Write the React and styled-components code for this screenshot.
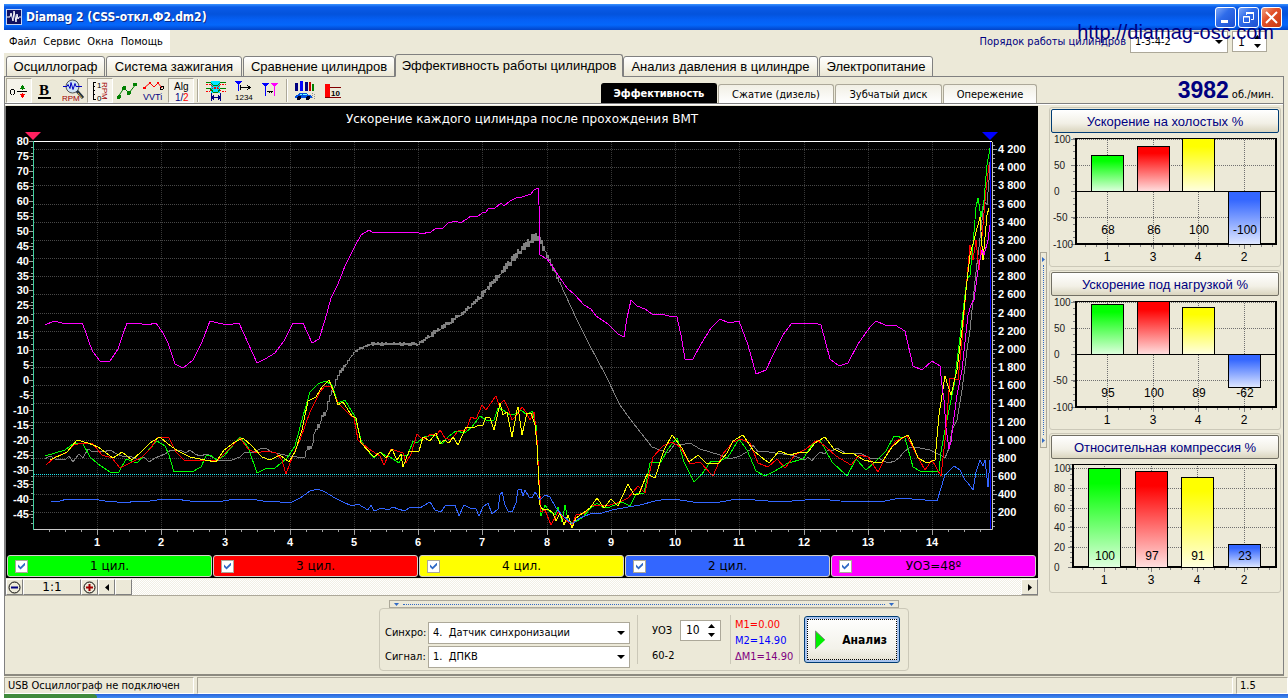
import React from "react";
import styled, { createGlobalStyle, css } from "styled-components";

const sans = '"Liberation Sans", Arial, sans-serif';
const ui = '"DejaVu Sans Condensed", "DejaVu Sans", Tahoma, sans-serif';
const wide = '"DejaVu Sans", Verdana, sans-serif';

const face = "#ece9d8";
const shade = "#aca899";
const edge = "#808080";
const navy = "#000080";

const Global = createGlobalStyle`
  *, *::before, *::after { box-sizing: border-box; }
  body { margin: 0; background: #fff; font: 11px ${ui}; color: #000; }
  button, input, select { font: inherit; color: inherit; margin: 0; padding: 0; border-radius: 0; }
  svg { display: block; }
`;

const Desktop = styled.div`
  min-height: 100vh;
  padding: 4px 0 0 4px;
  display: flex;
  flex-direction: column;
`;

const Window = styled.main`
  position: relative;
  flex: 1;
  display: flex;
  flex-direction: column;
  background: ${face};
`;

/* ---------- title bar ---------- */

const TitleBar = styled.header`
  height: 26px;
  padding: 0 6px 0 2px;
  display: flex;
  align-items: center;
  gap: 4px;
  color: #fff;
  background: linear-gradient(#3a93ff 0, #0a5be8 3px, #0453dc 10px, #0560f5 16px, #0467fb 21px, #0244c8 100%);
`;

const Title = styled.h1`
  flex: 1;
  margin: 0;
  font: bold 12px ${ui};
  text-shadow: 1px 1px 0 #0a2a88;
`;

const WindowButtons = styled.div`
  display: flex;
  gap: 2px;
`;

const WindowButton = styled.button`
  width: 21px;
  height: 21px;
  display: grid;
  place-items: center;
  border: 1px solid #fff;
  border-radius: 3px;
  background: ${(p) =>
    p.$close
      ? "linear-gradient(135deg, #f0a080, #e2512a 40%, #c8380e)"
      : "linear-gradient(135deg, #7fa8f8, #2f6cea 40%, #1c4fd0)"};
`;

/* ---------- menu row ---------- */

const MenuRow = styled.div`
  height: 24px;
  padding-right: 21px;
  display: flex;
  justify-content: space-between;
`;

const Menu = styled.nav`
  height: 23px;
  padding: 0 7px 0 5px;
  display: flex;
  align-items: center;
  gap: 7px;
  background: #fff;
`;

const MenuItem = styled.button`
  border: 0;
  background: none;
  font: 11px ${ui};
`;

const Order = styled.div`
  height: 23px;
  display: flex;
  align-items: center;
  gap: 4px;
`;

const OrderLabel = styled.label`
  color: ${navy};
  font: 11px ${ui};
`;

const Watermark = styled.a`
  position: absolute;
  top: 16px;
  right: 14px;
  color: ${navy};
  font: 20px/24px ${sans};
  text-decoration: none;
`;

/* ---------- fields ---------- */

const SelectBox = styled.div`
  display: grid;
  width: ${(p) => p.$width}px;
  height: 22px;

  > * { grid-area: 1 / 1; }
  > svg { place-self: center end; margin-right: 5px; pointer-events: none; }
`;

const Select = styled.select`
  appearance: none;
  width: 100%;
  padding-left: 4px;
  border: 1px solid ${shade};
  background: #fff;
  font: 11px ${ui};
`;

const SpinBox = styled.div`
  width: ${(p) => p.$width}px;
  height: 21px;
  padding: 0 4px 0 5px;
  display: flex;
  align-items: center;
  border: 1px solid ${shade};
  background: #fff;
`;

const SpinInput = styled.input`
  appearance: textfield;
  flex: 1;
  min-width: 0;
  border: 0;
  background: none;
  font: 12px ${ui};
  &::-webkit-inner-spin-button { appearance: none; margin: 0; }
`;

const SpinButtons = styled.div`
  display: grid;
  gap: 2px;
`;

const SpinButton = styled.button`
  width: 9px;
  height: 7px;
  display: grid;
  place-items: center;
  border: 0;
  background: none;
`;

/* ---------- tabs ---------- */

const Tabs = styled.div`
  height: 23px;
  padding-left: 2px;
  margin-bottom: -1px;
  display: flex;
  align-items: flex-end;
  gap: 1px;
  z-index: 1;
`;

const Tab = styled.button`
  width: ${(p) => p.$width}px;
  height: 21px;
  border: 1px solid ${edge};
  border-radius: 3px 3px 0 0;
  background: linear-gradient(#fff, #f4f2e6 60%, #eae6d4);
  font: 13px ${sans};
  white-space: nowrap;
  ${(p) =>
    p.$active &&
    css`
      height: 23px;
      margin: 0 -1px;
      border-bottom-color: ${face};
      background: ${face};
    `}
`;

const Page = styled.section`
  flex: 1;
  margin-right: 4px;
  display: flex;
  flex-direction: column;
  border: 1px solid ${edge};
  border-bottom-width: 2px;
  border-bottom-color: #8c8a80;
`;

/* ---------- toolbar ---------- */

const Toolbar = styled.div`
  height: 27px;
  padding: 0 9px 0 1px;
  display: flex;
  align-items: flex-end;
  border-bottom: 1px solid ${edge};
`;

const ToolGroup = styled.div`
  display: flex;
  align-self: center;
  gap: 1px;
  flex: 1;
`;

const Tool = styled.button`
  width: 26px;
  height: 25px;
  display: grid;
  place-items: center;
  border: 1px solid transparent;
  background: none;
  ${(p) =>
    p.$pressed &&
    css`
      border-color: ${shade} #fff #fff ${shade};
      background: #f5f3ea;
    `}
`;

const ToolDivider = styled.span`
  width: 2px;
  height: 23px;
  margin: 1px 3px 0 2px;
  background: linear-gradient(90deg, ${shade} 50%, #fff 50%);
`;

const SubTabs = styled.div`
  display: flex;
  align-items: flex-end;
  gap: 1px;
`;

const SubTab = styled.button`
  width: ${(p) => p.$width}px;
  height: 19px;
  border: 1px solid ${shade};
  border-bottom: 0;
  border-radius: 3px 3px 0 0;
  background: linear-gradient(#f1efe4, #fff);
  font: 11px ${ui};
  white-space: nowrap;
  ${(p) =>
    p.$active &&
    css`
      height: 20px;
      border-color: #000;
      background: #000;
      color: #fff;
      font-weight: bold;
    `}
`;

const Speed = styled.div`
  width: 237px;
  display: flex;
  align-items: baseline;
  justify-content: flex-end;
  gap: 3px;
  color: ${navy};
  font: bold 23px/26px ${sans};
`;

const SpeedUnit = styled.span`
  color: #000;
  font: 11px ${ui};
`;

/* ---------- work area ---------- */

const Work = styled.div`
  padding: 1px 2px 0 0;
  display: grid;
  grid-template-columns: minmax(0, 1fr) 11px 232px;
  border-top: 1px solid #fff;
`;

const Scope = styled.div`
  border-left: 1px solid ${edge};
`;

const Legend = styled.div`
  padding: 1px 2px 1px 1px;
  display: grid;
  grid-template-columns: repeat(5, 1fr);
  gap: 1px;
  background: #000;
`;

const LegendItem = styled.label`
  height: 22px;
  padding: 0 7px;
  display: grid;
  grid-template-columns: 13px 1fr 13px;
  align-items: center;
  border: 1px solid #d4d0c8;
  border-radius: 3px;
  background: ${(p) => p.$color};
  font: 12px ${wide};
  text-align: center;
`;

const Check = styled.input`
  appearance: none;
  width: 13px;
  height: 13px;
  border: 1px solid ${shade};
  background: #fff;
  display: grid;
  place-items: center;
  &:checked::before {
    content: "";
    width: 7px;
    height: 7px;
    background: #316ac5;
    clip-path: polygon(0 28%, 36% 64%, 100% 0, 100% 40%, 36% 100%, 0 66%);
  }
`;

const ScrollRow = styled.div`
  height: 18px;
  padding-top: 1px;
  display: flex;
  border-bottom: 1px solid ${shade};
`;

const ScrollTrack = styled.div`
  flex: 1;
  background: repeating-conic-gradient(#fff 0 25%, #f1efe4 0 50%) 0 0 / 2px 2px;
`;

const Raised = styled.button`
  width: ${(p) => p.$width}px;
  height: 16px;
  display: grid;
  place-items: center;
  border: 1px solid;
  border-color: #fff ${edge} ${edge} #fff;
  background: ${face};
  font: 12px/14px ${wide};
`;

const VSplit = styled.button`
  align-self: center;
  justify-self: center;
  width: 7px;
  height: 196px;
  margin-top: -3px;
  padding: 4px 0;
  display: flex;
  flex-direction: column;
  align-items: center;
  gap: 3px;
  border: 1px solid ${shade};
  background: ${face};
`;

const VDots = styled.span`
  flex: 1;
  border-left: 1px dotted #316ac5;
`;

const Side = styled.aside`
  padding-top: 1px;
  display: flex;
  flex-direction: column;
  gap: 3px;
`;

const Group = styled.section`
  height: 160px;
  padding: 1px;
  border: 1px solid #cbc8b8;
  border-radius: 3px;
`;

const GroupButton = styled.button`
  display: block;
  width: 100%;
  height: 24px;
  border: 1px solid ${(p) => (p.$focus ? "#003c74" : "#716f64")};
  border-radius: 2px;
  background: linear-gradient(#fff, #f2f0e6 60%, #dad5bf);
  color: ${navy};
  font: 13px ${sans};
`;

/* ---------- lower panel ---------- */

const Lower = styled.div`
  flex: 1;
  min-height: 78px;
  padding: 4px 0 3px;
  display: flex;
  flex-direction: column;
  align-items: center;
`;

const HSplit = styled.button`
  width: 510px;
  height: 8px;
  padding: 0 4px;
  display: flex;
  align-items: center;
  gap: 4px;
  border: 1px solid ${shade};
  background: ${face};
`;

const HDots = styled.span`
  flex: 1;
  border-top: 1px dotted #316ac5;
`;

const Controls = styled.form`
  width: 530px;
  height: 63px;
  padding: 0 8px 0 5px;
  display: flex;
  align-items: center;
  border: 1px solid #cbc8b8;
  border-radius: 4px;
`;

const Sources = styled.div`
  margin-right: 7px;
  display: grid;
  grid-template-columns: 43px auto;
  align-items: center;
  row-gap: 2px;
  padding-top: 10px;
`;

const Divider = styled.span`
  width: 1px;
  height: 49px;
  background: #cbc8b8;
`;

const FieldLabel = styled.label`
  font: 11px ${ui};
`;

const Timing = styled.div`
  width: 92px;
  padding: 2px 0 0 14px;
  display: grid;
  grid-template-columns: 28px auto;
  align-items: center;
  row-gap: 8px;
`;

const Marks = styled.div`
  width: 68px;
  padding: 2px 0 0 4px;
  font: 11px/16px ${ui};
  white-space: nowrap;
`;

const Mark = styled.div`
  color: ${(p) => p.$color};
`;

const Analyze = styled.button`
  width: 96px;
  height: 47px;
  margin-left: 4px;
  padding: 0 12px 0 7px;
  display: flex;
  align-items: center;
  justify-content: space-between;
  border: 1px solid #003c74;
  border-radius: 3px;
  outline: 1px dotted #000;
  outline-offset: -4px;
  box-shadow: inset 0 0 0 2px #a9c4ee;
  background: linear-gradient(#fff, #f3f2ea 70%, #e4e1d2);
  font: bold 12px ${ui};
`;

/* ---------- status and task bars ---------- */

const Status = styled.footer`
  height: 18px;
  padding-top: 1px;
  display: flex;
  gap: 3px;
`;

const StatusCell = styled.div`
  ${(p) => (p.$width ? `width: ${p.$width}px;` : "flex: 1;")}
  padding-left: 3px;
  border: 1px solid;
  border-color: ${shade} #fff #fff ${shade};
  font: 11px/15px ${ui};
`;

const TaskBar = styled.div`
  height: 4px;
  display: flex;
  background: linear-gradient(#2a62d8, #3f8cf3);
`;

const StartEdge = styled.div`
  width: 93px;
  border-radius: 0 4px 0 0;
  background: #3f8a3c;
`;

/* ---------- small glyphs ---------- */

const Triangle = ({ dir, size = 9, color = "#000" }) => {
  const h = Math.ceil(size / 2);
  const shapes = {
    down: [size, h, `0,0 ${size},0 ${size / 2},${h}`],
    up: [size, h, `0,${h} ${size},${h} ${size / 2},0`],
    left: [h, size, `${h},0 ${h},${size} 0,${size / 2}`],
    right: [h, size, `0,0 0,${size} ${h},${size / 2}`],
  };
  const [w, ht, points] = shapes[dir];
  return (
    <svg width={w} height={ht} viewBox={`0 0 ${w} ${ht}`} aria-hidden="true">
      <polygon points={points} fill={color} />
    </svg>
  );
};

const Spinner = ({ id, label, value, width }) => (
  <SpinBox $width={width}>
    <SpinInput id={id} aria-label={label} type="number" defaultValue={value} />
    <SpinButtons>
      <SpinButton type="button" aria-label="Больше"><Triangle dir="up" size={7} /></SpinButton>
      <SpinButton type="button" aria-label="Меньше"><Triangle dir="down" size={7} /></SpinButton>
    </SpinButtons>
  </SpinBox>
);

const DropDown = ({ id, width, value }) => (
  <SelectBox $width={width}>
    <Select id={id} defaultValue={value}>
      <option value={value}>{value}</option>
    </Select>
    <Triangle dir="down" size={8} />
  </SelectBox>
);

const Icon = ({ children }) => (
  <svg width="24" height="24" viewBox="0 0 24 24" fill="none" shapeRendering="crispEdges" fontFamily="Liberation Sans, Arial, sans-serif">
    {children}
  </svg>
);

const icons = {
  offset: (
    <Icon>
      <ellipse cx="5.500" cy="13" rx="2" ry="3" stroke="#000" />
      <path d="M10 12.500h10" stroke="#000" />
      <path d="M15.500 7v4" stroke="#008000" />
      <path d="M15.500 14v4" stroke="#f00" />
      <path d="M12.500 10l3-4 3 4z" fill="#008000" />
      <path d="M12.500 15l3 4 3-4z" fill="#f00" />
    </Icon>
  ),
  bold: (
    <Icon>
      <text x="5" y="16" fontFamily="Liberation Serif, serif" fontSize="15" fontWeight="bold" fill="#000">B</text>
      <path d="M4 18.500h13" stroke="#000" strokeWidth="2" />
    </Icon>
  ),
  zoomRpm: (
    <Icon>
      <circle cx="11.500" cy="7.500" r="6.500" stroke="#555" fill="#cfe3f5" shapeRendering="auto" />
      <path d="M2 7.500h4l1-2 2 4 1-6 2 7 2-6 1 3h6" stroke="#0000c0" shapeRendering="auto" />
      <path d="M16 12l6 7" stroke="#234" strokeWidth="3" shapeRendering="auto" />
      <path d="M17 14l4 5" stroke="#e0b040" shapeRendering="auto" />
      <text x="1" y="22" fontSize="8" fill="#a00000">RPM</text>
    </Icon>
  ),
  rpmAxis: (
    <Icon>
      <path d="M8 3.500H5.500v17H8M5 7.500h2M5 11.500h2M5 15.500h2" stroke="#000" />
      <text x="9" y="9" fontSize="8" fill="#000">1</text>
      <text x="9" y="22" fontSize="8" fill="#000">0</text>
      <text transform="translate(14 3) rotate(90)" fontSize="8" fill="#a00000">RPM</text>
    </Icon>
  ),
  nodes: (
    <Icon>
      <path d="M3 18L9 9l5 5 7-9" stroke="#008000" shapeRendering="auto" />
      <g fill="#008000">
        <circle cx="4" cy="18" r="2" /><circle cx="9" cy="9" r="2" /><circle cx="14" cy="14" r="2" /><circle cx="20" cy="5.500" r="2" />
      </g>
    </Icon>
  ),
  vvti: (
    <Icon>
      <path d="M2 9l6-5 4 4 4-4 4 5" stroke="#f00" shapeRendering="auto" />
      <g fill="#f00"><circle cx="2.500" cy="9" r="1.500" /><circle cx="8" cy="4" r="1.500" /><circle cx="16" cy="4" r="1.500" /></g>
      <circle cx="20" cy="9" r="1.500" stroke="#000" />
      <text x="1" y="21" fontSize="9" fill={navy}>VVTi</text>
    </Icon>
  ),
  alg: (
    <Icon>
      <text x="5" y="11" fontSize="10" fill="#000">Alg</text>
      <text x="6" y="22" fontSize="10" fill={navy}>1/</text>
      <text x="14" y="22" fontSize="10" fill="#f00">2</text>
    </Icon>
  ),
  phase: (
    <Icon>
      <rect x="7" y="2" width="9" height="12" fill="#00e5ff" />
      <path d="M2 5h4l3 3h5l3-3h5M2 12h4l3-3h5l3 3h5" stroke="#f00" strokeDasharray="2 1" />
      <path d="M2 3h4l3 3h5l3-3h5M2 9h4l3 4h5l3-4h5" stroke="#008000" />
      <path d="M7.500 14v8M16.500 14v8M8 18.500h8M10 16.500l-2 2 2 2M14 16.500l2 2-2 2" stroke={navy} />
    </Icon>
  ),
  numbering: (
    <Icon>
      <path d="M4 2h7L8 6v5H7V6z" fill="#00f" />
      <path d="M7.500 5v7" stroke="#00f" />
      <path d="M9.500 6v5M10 8.500h8M16 6l3 2.500-3 2.500" stroke="#000" />
      <text x="4" y="21" fontSize="8" fill="#000">1234</text>
    </Icon>
  ),
  markers: (
    <Icon>
      <path d="M4 4h7L8 8v9H7V8z" fill="#00f" />
      <path d="M13 4h7l-3 4v9h-1V8z" fill="#f0f" />
      <path d="M7.500 4v13" stroke="#00f" />
      <path d="M16.500 4v13" stroke="#f0f" />
      <path d="M9 12.500h6M11 11.500v2M13 11.500v2" stroke="#000" />
    </Icon>
  ),
  car: (
    <Icon>
      <path d="M2 4h3v8H2zM12 3h3v9h-3z" fill={navy} />
      <path d="M7 2h3v10H7z" fill="#00f" />
      <path d="M16 3h2v9h-2z" fill="#c00000" />
      <path d="M19 5h2v7h-2z" fill="#008000" />
      <path d="M2 17l2-1 2-2h7l3 2 3 1v2H2z" fill="#0050e0" />
      <path d="M7 15h2v1H6zM10 15h3l1 1h-4z" fill="#7ff" />
      <circle cx="6" cy="19" r="2" fill="#002" /><circle cx="15" cy="19" r="2" fill="#002" />
      <path d="M19.500 14v6M21.500 15v6" stroke="#909090" strokeDasharray="1 1" />
    </Icon>
  ),
  bars: (
    <Icon>
      <path d="M5 5h5v13H5z" fill="#f00" />
      <path d="M10 8.500h11M5 18.500h16" stroke="#800000" />
      <text x="11" y="17" fontSize="8" fontWeight="bold" fill="#000">10</text>
    </Icon>
  ),
};

const toolSets = [
  [
    { icon: "offset", label: "Смещение", pressed: true },
    { icon: "bold", label: "Толщина линий" },
    { icon: "zoomRpm", label: "Обороты" },
    { icon: "rpmAxis", label: "Шкала оборотов", pressed: true },
    { icon: "nodes", label: "Точки" },
    { icon: "vvti", label: "VVTi" },
    { icon: "alg", label: "Алгоритм", pressed: true },
  ],
  [
    { icon: "phase", label: "Фаза" },
    { icon: "numbering", label: "Нумерация" },
    { icon: "markers", label: "Маркеры" },
  ],
  [
    { icon: "car", label: "Автомобиль" },
    { icon: "bars", label: "Диаграмма" },
  ],
];

/* ---------- main chart ---------- */

const traces = {
  magenta:
    "45,325 54,321 62,323 82,323 85,330 90,345 93,352 100,361 110,361 118,349 122,337 127,323 137,323 147,325 156,323 163,333 168,343 175,364 183,368 193,360 202,342 210,321 218,323 228,325 239,323 248,343 257,363 265,359 275,353 284,341 293,323 303,323 312,343 319,339 325,320 331,298 338,284 345,266 355,246 361,235 369,230 372,232 418,232 420,234 431,232 436,228 443,228 448,223 456,221 460,223 467,219 471,216 477,217 482,213 486,212 489,208 495,208 501,203 504,206 510,201 516,198 522,197 531,194 534,190 538,188 539,205 540,255 547,259 550,263 558,275 567,288 575,295 584,305 591,309 596,316 608,324 618,334 624,337 627,318 631,300 637,306 645,309 652,314 661,314 669,316 677,317 681,335 685,359 693,359 701,344 711,328 720,319 729,323 739,321 748,345 756,374 766,370 773,355 783,335 792,323 815,323 821,325 830,359 839,366 848,363 858,344 870,327 876,321 885,325 895,325 905,331 913,366 922,370 932,361 940,366 942,385 944,400 946,428 949,449 951,442 953,425 957,395 962,370 968,315 971,305 974,300 978,270 982,250 984,255 988,240 990,225",
  green:
    "45,456 65,450 74,443 83,444 90,457 98,464 110,472 119,472 126,459 137,463 145,454 157,441 165,446 169,455 174,472 182,471 192,472 201,467 206,456 210,455 217,460 224,456 240,437 248,447 257,473 267,468 275,468 287,458 295,446 303,416 310,392 318,384 325,381 332,385 338,403 345,400 355,417 361,440 367,450 374,458 380,452 386,456 390,457 396,461 399,463 402,456 408,455 413,441 417,443 424,437 435,435 442,444 448,437 456,431 465,433 472,427 480,416 486,420 494,420 498,408 503,410 510,415 515,414 521,410 527,415 532,411 536,425 538,460 540,500 541,516 545,505 550,512 555,515 558,507 562,522 565,505 568,520 573,523 582,518 590,509 597,503 602,507 610,507 622,502 630,506 636,494 644,493 650,463 661,462 668,449 677,438 684,462 694,482 702,474 711,461 720,461 728,457 739,439 747,450 756,471 765,476 775,471 788,463 803,459 812,445 820,440 832,462 847,476 856,459 866,470 875,462 886,451 894,436 905,438 913,467 920,471 939,471 941,452 945,430 950,405 954,385 959,345 965,295 967,280 970,275 973,245 976,207 978,198 981,217 984,200 987,165 990,148",
  red:
    "46,465 55,457 66,453 74,445 82,443 93,444 102,455 112,458 120,468 130,463 142,457 150,449 158,437 169,438 176,452 185,461 195,460 210,461 218,460 225,453 234,444 240,438 248,449 256,453 266,451 276,453 282,460 286,474 293,455 300,440 310,412 320,392 325,386 331,386 338,403 348,413 354,418 358,440 369,449 380,456 384,465 391,449 403,453 406,463 411,454 417,434 423,440 431,434 436,436 440,430 445,438 451,440 458,431 466,430 471,417 476,419 482,405 486,410 493,400 496,396 499,405 504,400 508,408 512,420 517,415 522,407 526,412 530,420 534,412 537,440 539,480 541,512 545,510 551,525 558,512 565,520 572,525 576,515 585,513 592,506 600,505 610,505 620,502 628,498 638,486 645,493 653,457 663,446 672,442 680,447 690,464 700,462 713,476 722,455 733,442 741,439 750,443 758,463 768,467 777,459 785,468 795,455 806,449 817,440 826,447 836,456 851,465 859,455 868,457 878,472 888,452 896,441 907,436 914,450 925,470 932,460 941,476 945,440 950,378 958,380 962,340 966,290 970,245 973,260 976,240 979,270 983,225 986,190 989,165",
  yellow:
    "50,460 67,452 77,440 88,443 98,447 113,458 122,452 132,460 140,453 150,443 160,437 168,444 178,451 190,457 205,460 216,462 224,450 235,442 243,438 252,446 262,457 270,460 280,455 289,462 295,452 302,430 308,401 316,397 322,387 329,380 333,390 338,405 343,402 352,416 356,418 361,443 374,457 380,452 386,458 392,449 397,460 401,454 403,467 409,451 419,451 423,437 430,441 436,433 440,444 444,440 449,443 453,437 458,445 466,427 472,428 480,425 483,425 486,417 490,418 494,430 499,408 500,403 503,415 507,412 512,437 517,410 518,407 522,435 527,413 531,413 535,425 537,445 539,485 540,505 543,510 548,509 553,513 556,521 560,513 564,525 568,515 572,528 576,518 583,513 590,508 597,498 604,508 611,499 618,506 628,484 634,495 639,494 647,474 655,478 664,450 672,435 682,448 689,462 698,455 706,463 718,464 727,453 733,441 743,435 753,450 761,457 769,463 779,451 790,455 797,453 808,452 815,443 825,437 834,449 842,453 852,453 864,460 873,462 882,462 892,447 902,438 908,435 915,450 918,458 927,463 935,460 939,415 945,376 948,386 951,395 957,370 962,330 966,290 970,255 974,240 980,217 983,260 987,215 989,208",
  blue:
    "51,501 60,501 67,499 92,499 105,501 117,502 126,503 135,501 150,501 165,499 175,499 190,501 205,501 217,502 235,499 250,499 263,501 280,502 292,502 300,498 310,491 318,489 325,492 335,498 343,502 352,506 358,504 368,510 371,505 374,511 382,508 388,510 393,507 398,509 405,511 410,507 420,508 430,502 435,510 441,512 445,506 455,505 459,516 464,505 470,508 476,509 479,516 483,507 488,503 492,514 498,509 500,495 502,492 505,505 508,511 512,512 516,503 518,490 521,489 523,496 525,490 529,497 532,498 535,492 540,500 545,495 550,497 556,508 562,515 572,524 580,518 590,514 602,513 612,510 628,507 640,505 655,501 668,499 680,500 700,503 720,502 737,499 755,500 780,502 805,500 820,499 840,501 880,502 900,498 912,499 925,500 937,501 941,488 945,475 950,470 954,466 960,470 965,480 968,483 973,490 976,472 980,460 983,466 985,460 988,487 990,460",
};

const speedPoints = [
  [45, 459], [50, 456], [55, 459], [65, 460], [69, 456], [73, 462], [79, 454], [83, 458], [88, 449], [93, 452], [98, 451], [103, 452],
  [110, 450], [117, 454], [122, 456], [132, 457], [138, 460], [144, 457], [149, 462], [155, 458], [160, 456], [165, 454], [171, 450],
  [180, 450], [186, 453], [190, 450], [195, 454], [200, 456], [207, 454], [212, 457], [220, 461], [232, 460], [240, 457], [245, 452],
  [252, 453], [260, 449], [265, 448], [272, 452], [280, 454], [290, 456], [304, 458], [307, 450], [312, 446], [315, 432], [320, 424],
  [322, 415], [326, 412], [330, 395], [334, 388], [338, 375], [345, 367], [350, 358], [355, 352], [362, 347], [370, 344], [418, 344],
  [430, 336], [440, 329], [450, 322], [460, 315], [470, 307], [480, 297], [487, 289], [500, 274], [510, 262], [520, 251], [530, 241],
  [538, 236], [545, 251], [555, 272], [565, 294], [577, 320], [590, 346], [605, 374], [620, 405], [630, 419], [652, 447], [660, 450],
  [668, 453], [675, 444], [685, 444], [690, 443], [700, 449], [710, 452], [720, 455], [730, 459], [740, 456], [750, 450], [753, 445],
  [758, 452], [763, 451], [775, 453], [790, 455], [797, 457], [805, 460], [808, 457], [812, 461], [815, 457], [820, 452], [825, 454],
  [828, 450], [832, 451], [837, 448], [845, 453], [860, 453], [870, 458], [880, 459], [888, 463], [895, 461], [900, 457], [903, 453],
  [910, 447], [920, 448], [930, 450], [940, 455], [945, 458], [949, 448], [952, 430], [957, 420], [962, 390], [967, 350], [970, 330],
  [972, 310], [976, 272], [981, 230], [984, 200], [987, 205], [989, 180], [991, 145],
];

const noiseAt = (x) => {
  if (x < 304 || x > 560) return 0;
  if (x < 345) return 3;
  if (x < 430) return 2;
  if (x < 480) return 3;
  if (x < 510) return 4;
  return x < 545 ? 6 : 3;
};

const hash = (x) => {
  const s = Math.sin(x * 127.1) * 43758.5453;
  return s - Math.floor(s);
};

const noisy = (points) => {
  const out = [];
  for (let i = 0; i < points.length - 1; i += 1) {
    const [x0, y0] = points[i];
    const [x1, y1] = points[i + 1];
    out.push(`${x0},${y0}`);
    if (noiseAt(x0) > 0) {
      for (let x = x0 + 1; x < x1; x += 1) {
        const y = y0 + ((y1 - y0) * (x - x0)) / (x1 - x0);
        const swing = (x % 2 ? 1 : -1) * (0.3 + 0.7 * hash(x));
        out.push(`${x},${Math.round(y + swing * noiseAt(x))}`);
      }
    }
  }
  out.push(points[points.length - 1].join(","));
  return out.join(" ");
};

const range = (n) => Array.from({ length: n }, (_, i) => i);
const yLeft = (v) => Math.round(380 - v * 2.985) + 0.5;
const yRight = (v) => Math.round(530.5 - v * 0.0908) + 0.5;
const xTime = (t) => Math.round(32.6 + t * 64.25) + 0.5;

const ScopeChart = () => (
  <svg viewBox="6 106 1032 448" width="100%" role="img" aria-label="Ускорение каждого цилиндра после прохождения ВМТ" fontFamily="Liberation Sans, Arial, sans-serif" fontSize="11" fontWeight="bold">
    <rect x="6" y="106" width="1032" height="448" fill="#000" />
    <text x="522" y="123" textAnchor="middle" fill="#fff" fontFamily="DejaVu Sans, Verdana, sans-serif" fontSize="12" fontWeight="normal">
      Ускорение каждого цилиндра после прохождения ВМТ
    </text>
    <g stroke="#484848" strokeDasharray="1 1">
      {range(21).map((i) => (
        <path key={i} d={`M34 ${yRight(200 * (i + 1))}H991`} />
      ))}
    </g>
    <g stroke="#383838" strokeDasharray="1 1">
      {range(14).map((i) => (
        <path key={i} d={`M${xTime(i + 1)} 142V529`} />
      ))}
    </g>
    <g fill="none" stroke="#a0a0a0">
      {range(65).map((i) => (
        <path key={i} d={`M31 ${yLeft(80 - i * 2)}h2`} />
      ))}
      {range(26).map((i) => (
        <path key={i} d={`M29 ${yLeft(80 - i * 5)}h4`} />
      ))}
      {range(85).map((i) => (
        <path key={i} d={`M993 ${yRight(50 * (i + 1))}h${(i + 1) % 4 === 0 ? 4 : 2}`} />
      ))}
      {range(59).map((i) => (
        <path key={i} d={`M${xTime((i + 1) / 4)} 530v${(i + 1) % 4 === 0 ? 5 : 2}`} />
      ))}
    </g>
    <g fill="#fff">
      {range(26).map((i) => (
        <text key={i} x="29" y={yLeft(80 - i * 5) + 3.5} textAnchor="end">{80 - i * 5}</text>
      ))}
      {range(21).map((i) => {
        const v = 200 * (i + 1);
        return (
          <text key={v} x="998" y={yRight(v) + 3.5}>
            {v >= 1000 ? `${Math.floor(v / 1000)} ${String(v % 1000).padStart(3, "0")}` : v}
          </text>
        );
      })}
      {range(14).map((i) => (
        <text key={i} x={xTime(i + 1) - 0.5} y="546" textAnchor="middle">{i + 1}</text>
      ))}
    </g>
    <path d="M33 141.500H992" stroke="#fff" />
    <path d="M33 529.500H992.500V142" stroke="#c8c8c8" fill="none" />
    <path d="M33.500 141V530" stroke="#40d0a0" />
    <path d="M34 474.500H990" stroke="#20e8f0" strokeDasharray="1 1" />
    <g fill="none" strokeWidth="1" shapeRendering="crispEdges">
      <polyline points={noisy(speedPoints)} stroke="#808080" />
      <polyline points={traces.green} stroke="#00ff00" />
      <polyline points={traces.red} stroke="#ff0000" />
      <polyline points={traces.yellow} stroke="#ffff00" />
      <polyline points={traces.blue} stroke="#3366ff" />
      <polyline points={traces.magenta} stroke="#ff00ff" />
    </g>
    <path d="M990.500 142V529" stroke="#0000ff" />
    <polygon points="25,132 41,132 33,140" fill="#ff2060" />
    <polygon points="982,132 998,132 990,140" fill="#0000ff" />
  </svg>
);

/* ---------- side charts ---------- */

const bars = [
  ["#00ff00", "#e0ffe0"],
  ["#ff0000", "#ffe0e0"],
  ["#ffff00", "#ffffe0"],
  ["#3366ff", "#e0e8ff"],
];
const cylinders = [1, 3, 4, 2];

const BarChart = ({ id, label, values, ticks, zero, unit, left, top, bottom, centers, valueY, minor }) => (
  <svg viewBox="0 0 228 132" width="100%" role="img" aria-label={label} fontFamily="Liberation Sans, Arial, sans-serif" fontSize="12">
    <defs>
      {bars.map(([from, to], i) => (
        <linearGradient key={from} id={`${id}${i}`} x1="0" y1="0" x2="0" y2="1">
          <stop offset="0.15" stopColor={from} />
          <stop offset="1" stopColor={to} />
        </linearGradient>
      ))}
    </defs>
    <g stroke="#707070" strokeDasharray="1 1">
      {ticks.map((t) => (
        <path key={t} d={`M${left} ${Math.round(zero - t * unit) + 0.5}H225`} />
      ))}
      {centers.map((x) => (
        <path key={x} d={`M${x - 0.5} ${top}V${bottom}`} />
      ))}
    </g>
    <g stroke="#808080">
      {ticks.map((t) => (
        <path key={t} d={`M${left - 4} ${Math.round(zero - t * unit) + 0.5}h4`} />
      ))}
      {range(minor).map((i) => (
        <path key={i} d={`M${left - 2} ${top + Math.round(((bottom - top) * i) / minor) + 0.5}h2`} />
      ))}
      {range(18).map((i) => (
        <path key={i} d={`M${left + 10 + i * 11}.5 ${bottom}v3`} />
      ))}
      {centers.map((x) => (
        <path key={x} d={`M${x - 0.5} ${bottom}v5`} />
      ))}
    </g>
    <rect x={left + 0.5} y={top + 0.5} width={225 - left} height={bottom - top} fill="none" stroke="#000" />
    <path d={`M${left + 1} ${top}V${bottom}M225 ${top}V${bottom + 1}M${left} ${bottom}H226`} stroke="#000" strokeWidth="2" fill="none" />
    <path d={`M${left} ${zero + 0.5}H225`} stroke="#000" />
    {values.map((v, i) => {
      const h = Math.round(Math.abs(v) * unit);
      const y = v < 0 ? zero : zero - h;
      return (
        <g key={cylinders[i]}>
          <rect x={centers[i] - 16.5} y={y + 0.5} width="32" height={h} fill={`url(#${id}${i})`} stroke="#000" />
          <text x={centers[i]} y={valueY} textAnchor="middle">{v}</text>
          <text x={centers[i] - 1} y={bottom + 17} textAnchor="middle">{cylinders[i]}</text>
        </g>
      );
    })}
    <g fontSize="10" fill="#202020">
      {ticks.map((t) => (
        <text key={t} x={t < 0 ? 2 : 3} y={Math.round(zero - t * unit) + 4}>{t}</text>
      ))}
    </g>
  </svg>
);

const signed = {
  ticks: [100, 50, 0, -50, -100],
  zero: 58,
  unit: 0.525,
  left: 24,
  top: 5,
  bottom: 111,
  minor: 16,
  centers: [57, 103, 148, 194],
  valueY: 101,
};

const relative = {
  ticks: [100, 80, 60, 40, 20, 0],
  zero: 108,
  unit: 0.99,
  left: 21,
  top: 5,
  bottom: 108,
  minor: 20,
  centers: [54, 101, 147, 194],
  valueY: 101,
};

const groups = [
  { id: "idle", label: "Ускорение на холостых %", values: [68, 86, 100, -100], scale: signed },
  { id: "load", label: "Ускорение под нагрузкой %", values: [95, 100, 89, -62], scale: signed },
  { id: "comp", label: "Относительная компрессия %", values: [100, 97, 91, 23], scale: relative },
];

const legend = [
  ["1 цил.", "#00ff00"],
  ["3 цил.", "#ff0000"],
  ["4 цил.", "#ffff00"],
  ["2 цил.", "#3366ff"],
  ["УОЗ=48º", "#ff00ff"],
];

const tabs = [
  ["Осциллограф", 99],
  ["Система зажигания", 136],
  ["Сравнение цилиндров", 152],
  ["Эффективность работы цилиндров", 228],
  ["Анализ давления в цилиндре", 195],
  ["Электропитание", 114],
];

const subTabs = [
  ["Эффективность", 116],
  ["Сжатие (дизель)", 116],
  ["Зубчатый диск", 107],
  ["Опережение", 94],
];

const Round = ({ plus }) => (
  <svg width="13" height="13" viewBox="0 0 13 13" fill="none">
    <circle cx="6.500" cy="6.500" r="5.500" stroke="#000" />
    <path d={plus ? "M3 6.500h7M6.500 3v7" : "M3 6.500h7"} stroke={plus ? "#a00000" : navy} strokeWidth="2" />
  </svg>
);

export default function App() {
  return (
    <Desktop>
      <Global />
      <Window>
        <TitleBar>
          <svg width="16" height="16" viewBox="0 0 16 16" aria-hidden="true">
            <rect x="0.500" y="0.500" width="15" height="15" fill="#101060" stroke="#c8d4f0" />
            <path d="M1 8h3l1-4 2 8 1-10 2 11 1-8 1 5 1-2h2" fill="none" stroke="#fff" />
          </svg>
          <Title>Diamag 2 (CSS-откл.Ф2.dm2)</Title>
          <WindowButtons>
            <WindowButton type="button" aria-label="Свернуть">
              <svg width="13" height="13" viewBox="0 0 13 13"><path d="M2 9h7v3H2z" fill="#fff" /></svg>
            </WindowButton>
            <WindowButton type="button" aria-label="Восстановить">
              <svg width="13" height="13" viewBox="0 0 13 13" fill="none" stroke="#fff">
                <path d="M4.500 4V1.500h7v7H9" /><path d="M4 2h8" strokeWidth="2" />
                <path d="M1.500 5.500h6v6h-6zM1 6h7" />
              </svg>
            </WindowButton>
            <WindowButton type="button" aria-label="Закрыть" $close>
              <svg width="13" height="13" viewBox="0 0 13 13"><path d="M1 1l11 11M12 1L1 12" stroke="#fff" strokeWidth="2" /></svg>
            </WindowButton>
          </WindowButtons>
        </TitleBar>

        <MenuRow>
          <Menu>
            {["Файл", "Сервис", "Окна", "Помощь"].map((item) => (
              <MenuItem key={item} type="button">{item}</MenuItem>
            ))}
          </Menu>
          <Order>
            <OrderLabel htmlFor="order">Порядок работы цилиндров</OrderLabel>
            <DropDown id="order" width={98} value="1-3-4-2" />
            <Spinner label="Первый цилиндр" value={1} width={35} />
          </Order>
        </MenuRow>
        <Watermark href="#site">http://diamag-osc.com</Watermark>

        <Tabs role="tablist">
          {tabs.map(([name, width], i) => (
            <Tab key={name} type="button" role="tab" aria-selected={i === 3} $width={width} $active={i === 3}>{name}</Tab>
          ))}
        </Tabs>

        <Page>
          <Toolbar>
            <ToolGroup>
              {toolSets.map((set, n) => (
                <React.Fragment key={n}>
                  {n > 0 && <ToolDivider />}
                  {set.map((t) => (
                    <Tool key={t.icon} type="button" aria-label={t.label} aria-pressed={!!t.pressed} $pressed={t.pressed}>
                      {icons[t.icon]}
                    </Tool>
                  ))}
                </React.Fragment>
              ))}
            </ToolGroup>
            <SubTabs role="tablist">
              {subTabs.map(([name, width], i) => (
                <SubTab key={name} type="button" role="tab" aria-selected={i === 0} $width={width} $active={i === 0}>{name}</SubTab>
              ))}
            </SubTabs>
            <Speed>3982<SpeedUnit>об./мин.</SpeedUnit></Speed>
          </Toolbar>

          <Work>
            <Scope>
              <ScopeChart />
              <Legend>
                {legend.map(([name, color]) => (
                  <LegendItem key={name} $color={color}>
                    <Check type="checkbox" defaultChecked />
                    <span>{name}</span>
                  </LegendItem>
                ))}
              </Legend>
              <ScrollRow>
                <Raised type="button" $width={17} aria-label="Уменьшить"><Round /></Raised>
                <Raised type="button" $width={58}>1:1</Raised>
                <Raised type="button" $width={17} aria-label="Увеличить"><Round plus /></Raised>
                <Raised type="button" $width={17} aria-label="Назад"><Triangle dir="left" size={7} /></Raised>
                <Raised type="button" $width={17} aria-label="Ползунок" />
                <ScrollTrack />
                <Raised type="button" $width={17} aria-label="Вперёд"><Triangle dir="right" size={7} /></Raised>
              </ScrollRow>
            </Scope>
            <VSplit type="button" aria-label="Скрыть диаграммы">
              <Triangle dir="right" size={5} color="#316ac5" />
              <VDots />
              <Triangle dir="right" size={5} color="#316ac5" />
            </VSplit>
            <Side>
              {groups.map((g, i) => (
                <Group key={g.id}>
                  <GroupButton type="button" $focus={i === 0}>{g.label}</GroupButton>
                  <BarChart id={g.id} label={g.label} values={g.values} {...g.scale} />
                </Group>
              ))}
            </Side>
          </Work>

          <Lower>
            <HSplit type="button" aria-label="Скрыть панель">
              <Triangle dir="down" size={5} color="#316ac5" />
              <HDots />
              <Triangle dir="down" size={5} color="#316ac5" />
            </HSplit>
            <Controls>
              <Sources>
                <FieldLabel htmlFor="sync">Синхро:</FieldLabel>
                <DropDown id="sync" width={202} value={"4.\u00a0 Датчик синхронизации"} />
                <FieldLabel htmlFor="signal">Сигнал:</FieldLabel>
                <DropDown id="signal" width={202} value={"1.\u00a0 ДПКВ"} />
              </Sources>
              <Divider />
              <Timing>
                <FieldLabel htmlFor="advance">УОЗ</FieldLabel>
                <Spinner id="advance" value={10} width={41} />
                <span>60-2</span>
              </Timing>
              <Divider />
              <Marks>
                <Mark $color="#ff0000">M1=0.00</Mark>
                <Mark $color="#0000ff">M2=14.90</Mark>
                <Mark $color="#800080">ΔM1=14.90</Mark>
              </Marks>
              <Divider />
              <Analyze type="button">
                <svg width="14" height="22" viewBox="0 0 14 22" aria-hidden="true">
                  <path d="M3.500 2v18L13 11z" fill="#00f000" /><path d="M3.500 20V2L13 11" fill="none" stroke="#808080" />
                </svg>
                Анализ
              </Analyze>
            </Controls>
          </Lower>
        </Page>

        <Status>
          <StatusCell $width={190}>USB Осциллограф не подключен</StatusCell>
          <StatusCell />
          <StatusCell $width={52}>1.5</StatusCell>
        </Status>
      </Window>
      <TaskBar><StartEdge /></TaskBar>
    </Desktop>
  );
}
